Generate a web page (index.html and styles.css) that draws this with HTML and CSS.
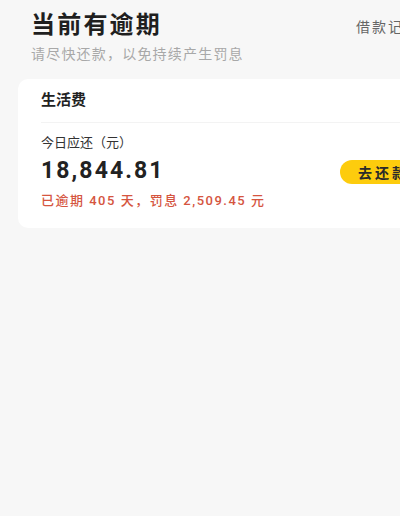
FILE: index.html
```html
<!DOCTYPE html>
<html lang="zh-CN">
<head>
<meta charset="utf-8">
<title>当前有逾期</title>
<link rel="stylesheet" href="styles.css">
</head>
<body>
<div class="page">
  <div class="header">
    <h1 class="title">当前有逾期</h1>
    <span class="record">借款记录</span>
  </div>
  <p class="subtitle">请尽快还款，以免持续产生罚息</p>
  <div class="card">
    <div class="card-head">生活费</div>
    <div class="label">今日应还（元）</div>
    <div class="amount-row">
      <span class="amount">18,844.81</span>
      <button class="pay-btn">去还款</button>
    </div>
    <div class="overdue">已逾期 405 天，罚息 2,509.45 元</div>
  </div>
</div>
</body>
</html>
```

FILE: styles.css
```css
html, body {
  margin: 0;
  padding: 0;
  overflow: hidden;
  background: #f7f7f7;
}
body {
  font-family: Roboto, "Noto Sans CJK SC", sans-serif;
  color: #222;
}
.page {
  width: 462px;
  padding-top: 10px;
}
.header {
  display: flex;
  justify-content: space-between;
  align-items: center;
  padding: 0 42px 0 31px;
  height: 30px;
}
.title {
  margin: 0;
  font-size: 24px;
  font-weight: 700;
  letter-spacing: 2.2px;
  line-height: 30px;
  color: #1f1f1f;
}
.record {
  font-size: 14px;
  letter-spacing: 2px;
  color: #666;
  line-height: 20px;
  margin-top: 4px;
}
.subtitle {
  margin: 4px 0 0 31px;
  font-size: 14px;
  letter-spacing: 1.2px;
  line-height: 20px;
  color: #a8a8a8;
}
.card {
  margin: 15px 18px 0;
  background: #fff;
  border-radius: 10px;
  padding: 0 23px 17px;
}
.card-head {
  height: 43px;
  line-height: 43px;
  font-size: 15px;
  font-weight: 700;
  color: #222;
  border-bottom: 1px solid #f3f3f3;
}
.label {
  margin-top: 10px;
  font-size: 13px;
  line-height: 20px;
  color: #333;
}
.amount-row {
  display: flex;
  justify-content: space-between;
  align-items: center;
  height: 36px;
}
.amount {
  font-size: 23px;
  font-weight: 700;
  letter-spacing: 2.1px;
  line-height: 36px;
  color: #222;
}
.pay-btn {
  border: none;
  background: #fdcc0d;
  border-radius: 12px;
  height: 24px;
  width: 81px;
  padding: 0 0 0 18px;
  text-align: left;
  font-family: Roboto, "Noto Sans CJK SC", sans-serif;
  font-size: 14px;
  font-weight: 700;
  letter-spacing: 3px;
  color: #2a2a2a;
  margin-top: 2px;
}
.overdue {
  margin-top: 2px;
  font-size: 13px;
  font-weight: 500;
  line-height: 20px;
  letter-spacing: 1.5px;
  color: #d5553f;
}
```
